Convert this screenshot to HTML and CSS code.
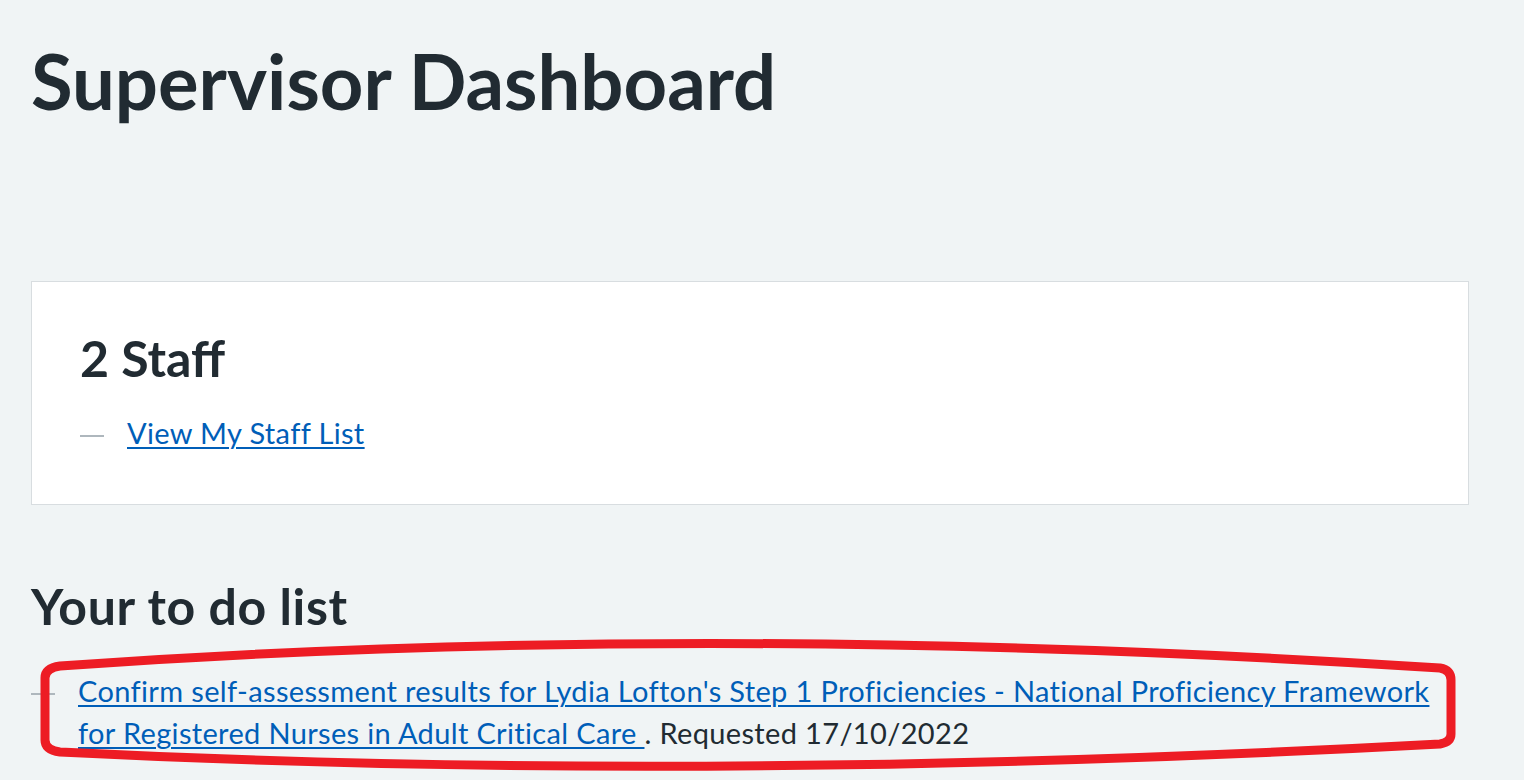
FILE: index.html
```html
<!DOCTYPE html>
<html lang="en">
<head>
<meta charset="utf-8">
<title>Supervisor Dashboard</title>
<link rel="stylesheet" href="styles.css">
</head>
<body>
<main class="page">
  <h1 class="page-title">Supervisor Dashboard</h1>

  <section class="card">
    <h2 class="card-heading">2 Staff</h2>
    <ul class="dash-list">
      <li><span class="item-text"><a href="#">View My Staff List</a></span></li>
    </ul>
  </section>

  <section class="todo">
    <h2 class="section-heading">Your to do list</h2>
    <ul class="dash-list">
      <li><span class="item-text"><a href="#">Confirm self-assessment results for Lydia Lofton's Step 1 Proficiencies - National Proficiency Framework for Registered Nurses in Adult Critical Care </a>. Requested 17/10/2022</span></li>
    </ul>
  </section>
</main>

<svg class="annotation" width="1524" height="780" viewBox="0 0 1524 780" aria-hidden="true">
  <path d="M45,740 L45,678 Q45,668 60,666 Q700,620 1440,668 Q1451,670 1451,680 L1451,734 Q1451,742 1440,744 Q700,784 60,752 Q45,750 45,740 Z" fill="none" stroke="#ed1c24" stroke-width="9" stroke-linejoin="round"/>
</svg>
</body>
</html>
```
FILE: styles.css
```css
html, body {
  margin: 0;
  padding: 0;
  overflow: hidden;
}

body {
  background: #f0f4f5;
  color: #212b32;
  font-family: Lato, "Liberation Sans", sans-serif;
  position: relative;
  width: 1524px;
  height: 780px;
}

.page {
  width: 1438px;
  margin-left: 31px;
  padding-top: 41px;
}

.page-title {
  margin: 0;
  font-size: 76px;
  line-height: 80px;
  font-weight: 700;
}

.card {
  margin-top: 160px;
  background: #ffffff;
  border: 1px solid #d8dde0;
  padding: 46px 48px 50px;
}

.card-heading {
  margin: 0;
  font-size: 50px;
  line-height: 60px;
  font-weight: 700;
}

.dash-list {
  list-style: none;
  margin: 0;
  padding: 0;
  font-size: 29px;
  line-height: 42px;
  letter-spacing: 0.35px;
}

.card .dash-list {
  margin-top: 24px;
}

.dash-list li {
  display: flex;
  align-items: flex-start;
}

.dash-list li::before {
  content: "";
  flex: 0 0 24px;
  height: 2px;
  margin-top: 23px;
  margin-right: 23px;
  background: #aeb7bd;
}

.item-text {
  flex: 1;
}

.dash-list a {
  color: #005eb8;
  text-decoration: underline;
  text-underline-offset: 3px;
  text-decoration-thickness: 2px;
}

.todo {
  margin-top: 73px;
}

.section-heading {
  margin: 0 0 36px;
  font-size: 50px;
  line-height: 56px;
  font-weight: 700;
  letter-spacing: 0.6px;
}

.annotation {
  position: absolute;
  top: 0;
  left: 0;
  pointer-events: none;
}
```
